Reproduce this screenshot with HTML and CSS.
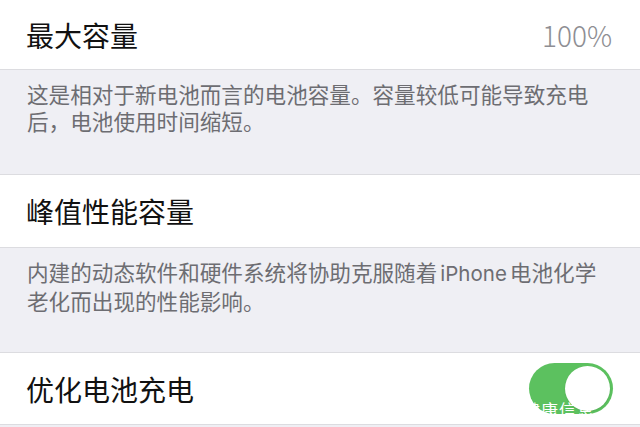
FILE: index.html
```html
<!DOCTYPE html>
<html lang="zh-CN">
<head>
<meta charset="utf-8">
<title>电池健康</title>
<link rel="stylesheet" href="styles.css">
</head>
<body>
<div class="page">
  <div class="cell cell-first">
    <span class="title">最大容量</span>
    <span class="value">100%</span>
  </div>
  <div class="footer">这是相对于新电池而言的电池容量。容量较低可能导致充电后，电池使用时间缩短。</div>
  <div class="cell">
    <span class="title">峰值性能容量</span>
  </div>
  <div class="footer">内建的动态软件和硬件系统将协助克服随着<span class="latin">iPhone</span>电池化学老化而出现的性能影响。</div>
  <div class="cell cell-last">
    <span class="title">优化电池充电</span>
    <span class="switch"><span class="knob"></span></span>
    <span class="watermark">健康信息</span>
  </div>
</div>
</body>
</html>
```
FILE: styles.css
```css
html, body {
  margin: 0;
  padding: 0;
}
body {
  background: #efeff4;
  font-family: "Noto Sans CJK SC", "Noto Sans", sans-serif;
  width: 640px;
  height: 427px;
  overflow: hidden;
}
.page {
  display: flex;
  flex-direction: column;
}
.cell {
  background: #ffffff;
  height: 72px;
  border-top: 1px solid #dcdce0;
  border-bottom: 1px solid #dcdce0;
  display: flex;
  align-items: center;
  justify-content: space-between;
  padding: 0 28px 0 26px;
  box-sizing: content-box;
  position: relative;
}
.cell-first {
  height: 69px;
  border-top: none;
}
.cell-last {
  height: 71px;
}
.title {
  font-size: 28px;
  color: #111111;
  line-height: 1;
}
.value {
  font-size: 28px;
  color: #8e8e93;
  line-height: 1;
  font-weight: 300;
}
.footer {
  height: 94px;
  padding: 10px 24px 0 27px;
  font-size: 21.6px;
  line-height: 27px;
  color: #6d6d72;
}
.latin {
  font-family: "Inter", "Noto Sans", sans-serif;
  font-size: 20.5px;
  margin: 0 3px;
}
.switch {
  width: 84px;
  height: 51px;
  border-radius: 26px;
  background: #5cc15f;
  display: flex;
  align-items: center;
  justify-content: flex-end;
  padding: 0 3px;
  box-sizing: border-box;
  margin-right: -1px;
}
.knob {
  width: 45px;
  height: 45px;
  border-radius: 50%;
  background: #ffffff;
  box-shadow: 0 1px 2px rgba(0, 0, 0, 0.1);
}
.watermark {
  position: absolute;
  left: 523px;
  top: 48px;
  font-size: 17px;
  line-height: 1;
  color: #ffffff;
  letter-spacing: 1px;
}
```
